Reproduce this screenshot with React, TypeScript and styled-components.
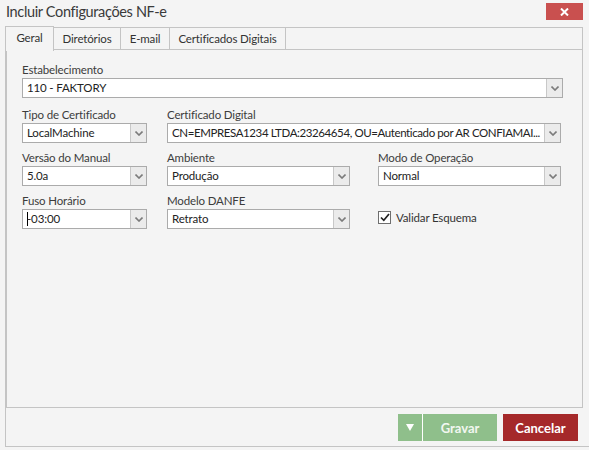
import React from 'react';
import styled, { createGlobalStyle } from 'styled-components';

const GlobalStyle = createGlobalStyle`
  html, body { margin: 0; padding: 0; background: #f4f4f4; }
  body { font-family: Lato, "Open Sans", Arial, sans-serif; color: #333; }
  * { box-sizing: border-box; }
`;

const Window = styled.div`
  width: 589px;
  height: 450px;
  background: #f4f4f4;
  display: flex;
  flex-direction: column;
`;

const TitleBar = styled.div`
  height: 26px;
  display: flex;
  align-items: flex-start;
  justify-content: space-between;
  padding: 0 6px 0 6px;
`;

const Title = styled.div`
  font-size: 14.5px;
  letter-spacing: -0.35px;
  line-height: 24px;
  color: #3a3a3a;
`;

const CloseButton = styled.button`
  margin-top: 3px;
  width: 37px;
  height: 17px;
  border: none;
  background: #c9504f;
  color: #fff;
  display: flex;
  align-items: center;
  justify-content: center;
  padding: 0;
`;

const Frame = styled.div`
  margin-left: 5px;
  width: 584px;
  flex: 1;
  display: flex;
  flex-direction: column;
`;

const TabStrip = styled.div`
  height: 24px;
  width: 578px;
  display: flex;
  align-items: flex-end;
`;

const Tab = styled.div<{ $active?: boolean; $width: number }>`
  width: ${p => p.$width}px;
  height: ${p => (p.$active ? 25 : 23)}px;
  margin-bottom: ${p => (p.$active ? -1 : 0)}px;
  font-size: 11.5px;
  letter-spacing: -0.15px;
  line-height: 21px;
  text-align: center;
  color: #333;
  background: #f4f4f4;
  border: 1px solid #c4c4c4;
  border-bottom: ${p => (p.$active ? 'none' : '1px solid #c4c4c4')};
  border-left-width: ${p => (p.$active ? 1 : 0)}px;
  position: relative;
  z-index: ${p => (p.$active ? 2 : 1)};
`;

const TabFill = styled.div`
  flex: 1;
  height: 23px;
  border-top: 1px solid #c4c4c4;
  border-right: 1px solid #c4c4c4;
  border-bottom: 1px solid #c4c4c4;
`;

const Panel = styled.div`
  width: 578px;
  height: 358px;
  border: 1px solid #c4c4c4;
  border-left: 2px solid #c4c4c4;
  border-top: none;
  padding: 12px 0 0 15px;
`;

const FormGrid = styled.div`
  display: grid;
  grid-template-columns: 125px 191px 185px;
  column-gap: 20px;
  row-gap: 7px;
`;

const Field = styled.div<{ $span?: number; $width?: number }>`
  grid-column: span ${p => p.$span ?? 1};
  display: flex;
  flex-direction: column;
  width: ${p => (p.$width ? `${p.$width}px` : 'auto')};
`;

const Label = styled.div`
  font-size: 11.5px;
  letter-spacing: -0.15px;
  line-height: 16px;
  height: 16px;
  color: #3c3c3c;
`;

const Combo = styled.div`
  height: 20px;
  background: #fff;
  border: 1px solid #ababab;
  display: flex;
  align-items: stretch;
`;

const ComboText = styled.div<{ $condensed?: boolean }>`
  flex: 1;
  min-width: 0;
  padding-left: 4px;
  font-size: 11.5px;
  letter-spacing: ${p => (p.$condensed ? -0.4 : -0.15)}px;
  line-height: 18px;
  color: #222;
  white-space: nowrap;
  overflow: hidden;
  display: flex;
  align-items: center;
`;

const DropButton = styled.div`
  width: 16px;
  background: #ebebeb;
  border-left: 1px solid #c8c8c8;
  display: flex;
  align-items: center;
  justify-content: center;
`;

const Caret = styled.span`
  display: inline-block;
  width: 1px;
  height: 14px;
  background: #000;
  margin-right: -1px;
`;

const CheckRow = styled.label`
  display: flex;
  align-items: center;
  gap: 5px;
  height: 20px;
  margin-top: 14px;
  font-size: 11.5px;
  letter-spacing: -0.15px;
  color: #333;
`;

const CheckBox = styled.span`
  width: 13px;
  height: 13px;
  border: 1px solid #6e6e6e;
  background: #fff;
  display: flex;
  align-items: center;
  justify-content: center;
`;

const Footer = styled.div`
  flex: 1;
  border-left: 1px solid #c4c4c4;
  border-bottom: 1px solid #c4c4c4;
  margin-bottom: 3px;
  display: flex;
  justify-content: flex-end;
  align-items: flex-start;
  padding: 6px 11px 0 0;
  gap: 6px;
`;

const SplitButton = styled.div`
  display: flex;
  gap: 1px;
  background: #fff;
`;

const ActionButton = styled.button<{ $color: string; $width: number }>`
  width: ${p => p.$width}px;
  height: 27px;
  border: none;
  padding: 0;
  background: ${p => p.$color};
  color: #fff;
  font-family: Lato, "Open Sans", Arial, sans-serif;
  font-weight: 700;
  font-size: 13px;
  display: flex;
  align-items: center;
  justify-content: center;
`;

const Chevron = () => (
  <svg width="8" height="5" viewBox="0 0 8 5">
    <path d="M0.5 0.5 L4 4 L7.5 0.5" fill="none" stroke="#7b7b7b" strokeWidth="1.6" />
  </svg>
);

const Select = ({ children, condensed }: { children: React.ReactNode; condensed?: boolean }) => (
  <Combo>
    <ComboText $condensed={condensed}>{children}</ComboText>
    <DropButton>
      <Chevron />
    </DropButton>
  </Combo>
);

export default function App() {
  return (
    <>
      <GlobalStyle />
      <Window>
        <TitleBar>
          <Title>Incluir Configurações NF-e</Title>
          <CloseButton>
            <svg width="9" height="8" viewBox="0 0 9 8">
              <path d="M1 0.5 L8 7.5 M8 0.5 L1 7.5" stroke="#fff" strokeWidth="2" />
            </svg>
          </CloseButton>
        </TitleBar>
        <Frame>
          <TabStrip>
            <Tab $active $width={49}>Geral</Tab>
            <Tab $width={67}>Diretórios</Tab>
            <Tab $width={49}>E-mail</Tab>
            <Tab $width={116}>Certificados Digitais</Tab>
            <TabFill />
          </TabStrip>
          <Panel>
            <FormGrid>
              <Field $span={3} style={{ marginBottom: 2 }}>
                <Label>Estabelecimento</Label>
                <Select>110 - FAKTORY</Select>
              </Field>
              <Field>
                <Label>Tipo de Certificado</Label>
                <Select>LocalMachine</Select>
              </Field>
              <Field $span={2} $width={394}>
                <Label>Certificado Digital</Label>
                <Select condensed>CN=EMPRESA1234 LTDA:23264654, OU=Autenticado por AR CONFIAMAI...</Select>
              </Field>
              <Field>
                <Label>Versão do Manual</Label>
                <Select>5.0a</Select>
              </Field>
              <Field $width={183}>
                <Label>Ambiente</Label>
                <Select>Produção</Select>
              </Field>
              <Field $width={183}>
                <Label>Modo de Operação</Label>
                <Select>Normal</Select>
              </Field>
              <Field>
                <Label>Fuso Horário</Label>
                <Select>
                  <Caret />-03:00
                </Select>
              </Field>
              <Field $width={183}>
                <Label>Modelo DANFE</Label>
                <Select>Retrato</Select>
              </Field>
              <Field>
                <CheckRow>
                  <CheckBox>
                    <svg width="10" height="9" viewBox="0 0 10 9">
                      <path d="M1 4.5 L3.8 7.3 L9 1" fill="none" stroke="#222" strokeWidth="1.7" />
                    </svg>
                  </CheckBox>
                  Validar Esquema
                </CheckRow>
              </Field>
            </FormGrid>
          </Panel>
          <Footer>
            <SplitButton>
              <ActionButton $color="#8fbf8b" $width={24}>
                <svg width="8" height="7" viewBox="0 0 8 7">
                  <path d="M0 0 H8 L4 7 Z" fill="#fff" />
                </svg>
              </ActionButton>
              <ActionButton $color="#8fbf8b" $width={74} style={{ color: '#f2f7f1' }}>
                Gravar
              </ActionButton>
            </SplitButton>
            <ActionButton $color="#a5292a" $width={75}>
              Cancelar
            </ActionButton>
          </Footer>
        </Frame>
      </Window>
    </>
  );
}
